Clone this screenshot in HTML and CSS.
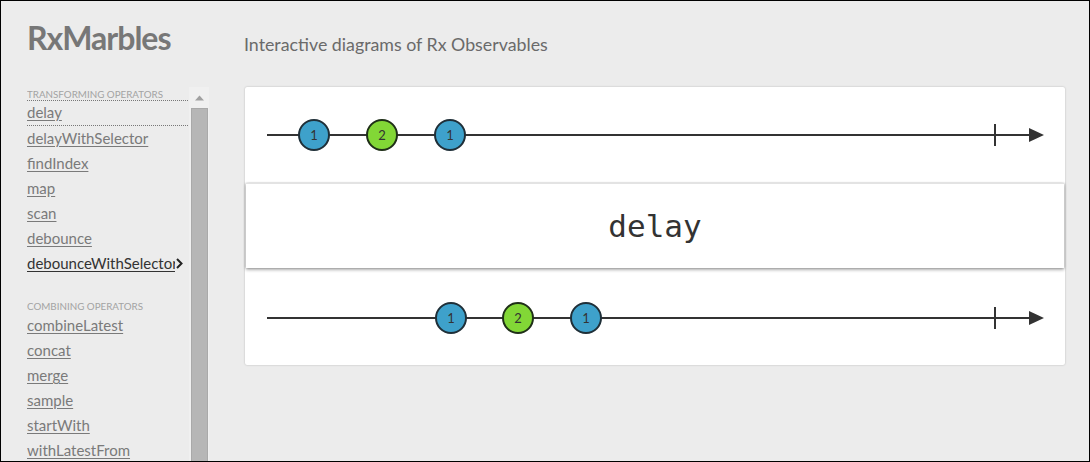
FILE: index.html
```html
<!DOCTYPE html>
<html>
<head>
<meta charset="utf-8">
<link rel="stylesheet" href="styles.css">
</head>
<body>
<div class="frame">
  <aside class="side">
    <h1 class="logo">RxMarbles</h1>
    <div class="nav-wrap">
      <nav class="nav">
        <div class="group-title first">TRANSFORMING OPERATORS</div>
        <a class="item focus">delay</a>
        <a class="item">delayWithSelector</a>
        <a class="item">findIndex</a>
        <a class="item">map</a>
        <a class="item">scan</a>
        <a class="item">debounce</a>
        <a class="item active">debounceWithSelector<span class="chev"><svg width="7" height="11" viewBox="0 0 7 11"><path d="M1 1 L5.5 5.5 L1 10" fill="none" stroke="#222" stroke-width="2"/></svg></span></a>
        <div class="group-title">COMBINING OPERATORS</div>
        <a class="item">combineLatest</a>
        <a class="item">concat</a>
        <a class="item">merge</a>
        <a class="item">sample</a>
        <a class="item">startWith</a>
        <a class="item">withLatestFrom</a>
      </nav>
      <div class="scrollbar">
        <div class="sb-up"><svg width="9" height="6" viewBox="0 0 9 6"><path d="M0 5.5 L4.5 0.5 L9 5.5 Z" fill="#a0a0a0"/></svg></div>
        <div class="sb-thumb"></div>
      </div>
    </div>
  </aside>
  <main class="main">
    <h2 class="subtitle">Interactive diagrams of Rx Observables</h2>
    <section class="card">
      <div class="stream">
        <svg width="820" height="96" viewBox="0 0 820 96">
          <line x1="22" y1="48" x2="786" y2="48" stroke="#333" stroke-width="2"/>
          <line x1="750" y1="37" x2="750" y2="59" stroke="#333" stroke-width="2"/>
          <path d="M784 41 L799 48 L784 55 Z" fill="#333"/>
          <g class="marble"><circle cx="69" cy="48" r="15" fill="#3ea1cb" stroke="#1f2f38" stroke-width="2"/><text x="69" y="52.5">1</text></g>
          <g class="marble"><circle cx="137" cy="48" r="15" fill="#82d736" stroke="#1f2f18" stroke-width="2"/><text x="137" y="52.5">2</text></g>
          <g class="marble"><circle cx="205" cy="48" r="15" fill="#3ea1cb" stroke="#1f2f38" stroke-width="2"/><text x="205" y="52.5">1</text></g>
        </svg>
      </div>
      <div class="operator">delay</div>
      <div class="stream bottom">
        <svg width="820" height="97" viewBox="0 0 820 97">
          <line x1="22" y1="50" x2="786" y2="50" stroke="#333" stroke-width="2"/>
          <line x1="750" y1="39" x2="750" y2="61" stroke="#333" stroke-width="2"/>
          <path d="M784 43 L799 50 L784 57 Z" fill="#333"/>
          <g class="marble"><circle cx="206" cy="50" r="15" fill="#3ea1cb" stroke="#1f2f38" stroke-width="2"/><text x="206" y="54.5">1</text></g>
          <g class="marble"><circle cx="273" cy="50" r="15" fill="#82d736" stroke="#1f2f18" stroke-width="2"/><text x="273" y="54.5">2</text></g>
          <g class="marble"><circle cx="341" cy="50" r="15" fill="#3ea1cb" stroke="#1f2f38" stroke-width="2"/><text x="341" y="54.5">1</text></g>
        </svg>
      </div>
    </section>
  </main>
</div>
</body>
</html>
```

FILE: styles.css
```css
* { box-sizing: border-box; }
html, body { margin: 0; padding: 0; }
body {
  background: #ececec;
  font-family: "Lato", "Open Sans", sans-serif;
}
.frame {
  width: 1090px;
  height: 462px;
  border: 1px solid #000;
  overflow: hidden;
  display: grid;
  grid-template-columns: 243px 1fr;
}
.side {
  padding-left: 26px;
  display: flex;
  flex-direction: column;
}
.logo {
  margin: 17px 0 0 0;
  height: 69px;
  font-size: 32px;
  font-weight: 700;
  color: #777;
  letter-spacing: -1px;
  line-height: 40px;
}
.nav-wrap {
  display: flex;
  flex: 1;
  min-height: 0;
}
.nav {
  width: 161px;
  overflow: hidden;
  display: flex;
  flex-direction: column;
}
.group-title {
  font-size: 9.8px;
  color: #a3a3a3;
  line-height: 12px;
  margin-top: 24px;
  height: 13px;
}
.group-title.first {
  margin-top: 1px;
  border-bottom: 1px dotted #777;
}
.item {
  display: block;
  white-space: nowrap;
  font-size: 15px;
  line-height: 25px;
  height: 25px;
  color: #7a7a7a;
  text-decoration: underline;
  text-underline-offset: 2px;
  position: relative;
}
.item.focus {
  border-bottom: 1px dotted #777;
  line-height: 23px;
}
.item.active { color: #333; }
.chev {
  position: absolute;
  left: 148px;
  top: 0;
  height: 25px;
  width: 10px;
  background: #ececec;
  display: flex;
  align-items: center;
  justify-content: flex-start;
  padding-left: 1px;
}
.chev svg { display: block; }
.scrollbar {
  width: 20px;
  margin-left: 1px;
  background: #f0f0f0;
  display: flex;
  flex-direction: column;
  align-items: center;
}
.sb-up {
  height: 21px;
  display: flex;
  align-items: center;
  justify-content: center;
}
.sb-thumb {
  width: 17px;
  flex: 1;
  background: #b6b6b6;
  border: 1px solid #a9a9a9;
}
.main {
  display: flex;
  flex-direction: column;
  padding-left: 1px;
}
.subtitle {
  margin: 32px 0 0 -1px;
  height: 54px;
  font-size: 17.8px;
  font-weight: 400;
  color: #6a6a6a;
  line-height: 22px;
}
.card {
  width: 820px;
  height: 278px;
  background: #fff;
  border-radius: 2px;
  box-shadow: 0 0 2px rgba(0,0,0,0.25);
  display: flex;
  flex-direction: column;
}
.stream { height: 96px; }
.stream.bottom { height: 97px; }
.stream svg { display: block; }
.marble text {
  font-family: "Lato", "Open Sans", sans-serif;
  font-size: 13px;
  fill: #333;
  text-anchor: middle;
}
.operator {
  height: 85px;
  margin: 0 1px;
  background: #fff;
  border-top: 1px solid #e3e3e3;
  box-shadow: 0 2px 3px rgba(0,0,0,0.3), 1px 0 2px rgba(0,0,0,0.15), -1px 0 2px rgba(0,0,0,0.15);
  display: flex;
  align-items: center;
  justify-content: center;
  font-family: "DejaVu Sans Mono", monospace;
  font-size: 31px;
  color: #333;
  position: relative;
}
```
